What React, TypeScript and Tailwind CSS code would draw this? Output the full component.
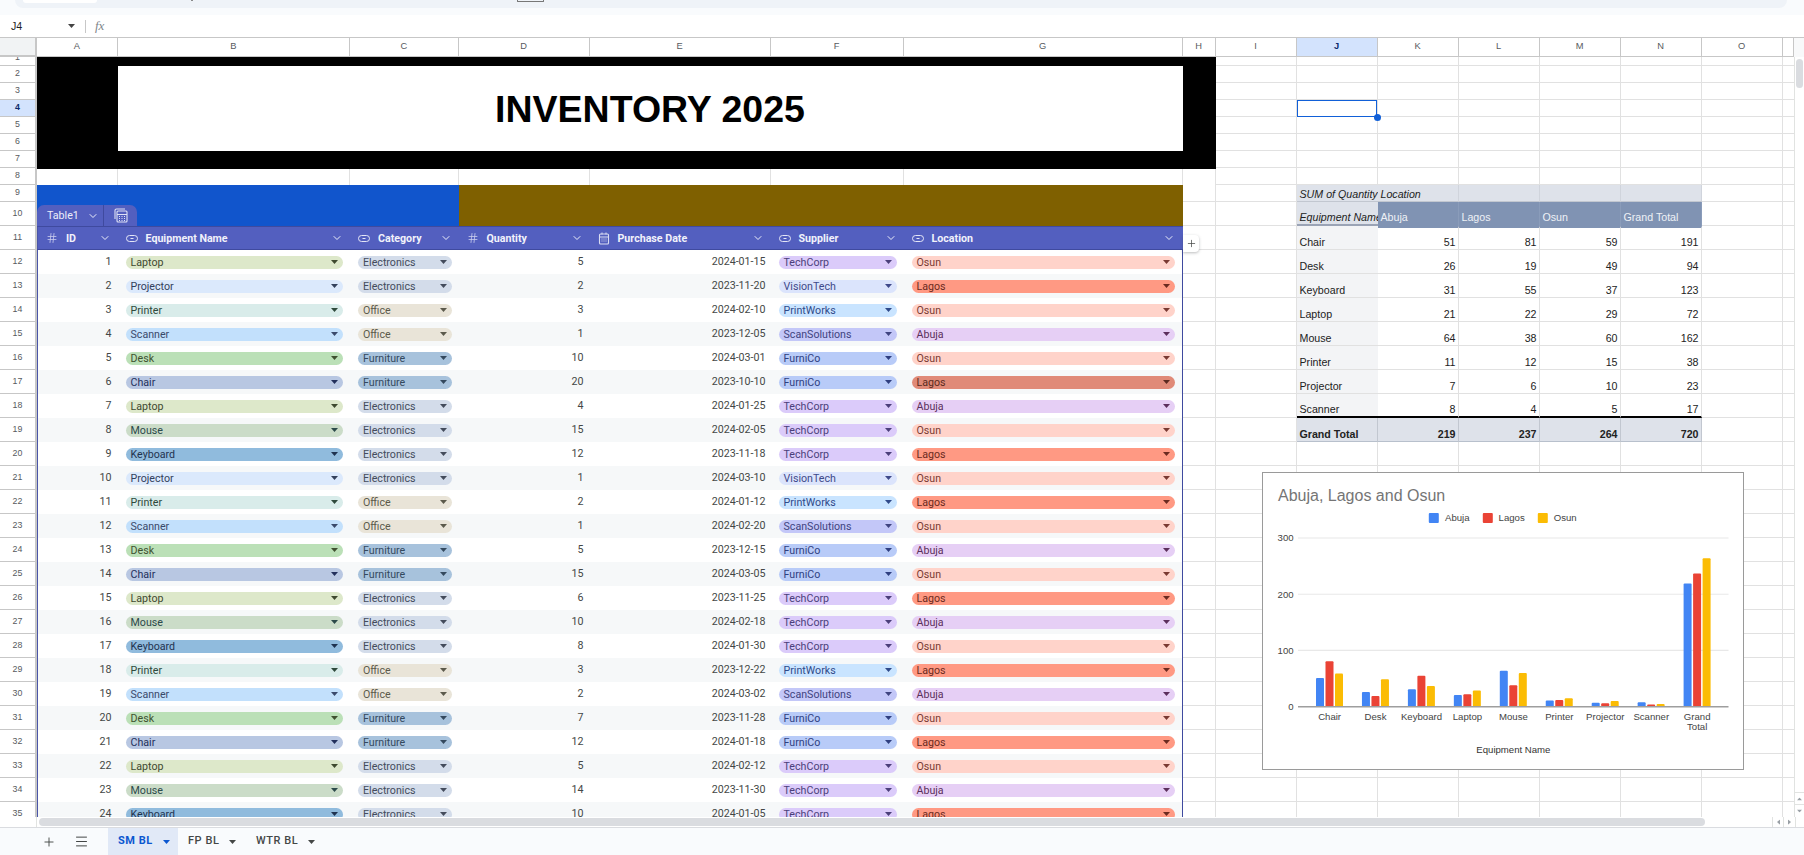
import { ChevronDown, Hash, Menu, Plus } from "lucide-react";

const SANS = "font-['Liberation_Sans',Arial,sans-serif]";

// row heights of the sheet, row 1 is scrolled half out of view
const ROW_HEIGHTS = [
  9, 17, 17, 17, 17, 17, 17, 17, 17, 24, 24, 24, 24, 24, 24, 24, 24, 24, 24, 24, 24, 24, 24, 24,
  24, 24, 24, 24, 24, 24, 24, 24, 24, 24, 24,
];
const rowHeight = (n: number) =>
  n === 1 ? "h-[9px]" : n < 10 ? "h-[17px]" : "h-[24px]";

const COLUMNS = [
  { name: "A", w: "w-[80.5px]" },
  { name: "B", w: "w-[232.5px]" },
  { name: "C", w: "w-[108.5px]" },
  { name: "D", w: "w-[131px]" },
  { name: "E", w: "w-[181px]" },
  { name: "F", w: "w-[133px]" },
  { name: "G", w: "w-[279px]" },
  { name: "H", w: "w-[33px]" },
  { name: "I", w: "w-[81px]" },
  { name: "J", w: "w-[81px]" },
  { name: "K", w: "w-[81px]" },
  { name: "L", w: "w-[81px]" },
  { name: "M", w: "w-[81px]" },
  { name: "N", w: "w-[81px]" },
  { name: "O", w: "w-[81px]" },
  { name: "", w: "w-[11.5px]" },
];

const CHIPS: Record<string, string> = {
  Laptop: "bg-[#dde8ca] text-[#3f4a30]",
  Projector: "bg-[#dbe9fc] text-[#33415c]",
  Printer: "bg-[#d9ecea] text-[#2f4a3c]",
  Scanner: "bg-[#c2e0fc] text-[#3a4a6b]",
  Desk: "bg-[#bbe0b7] text-[#3f5130]",
  Chair: "bg-[#b8c7e2] text-[#23305c]",
  Mouse: "bg-[#cbdcc8] text-[#2c4a4a]",
  Keyboard: "bg-[#90bbdd] text-[#1f3350]",
  Electronics: "bg-[#d3dcea] text-[#444c5c]",
  Office: "bg-[#e9e4d8] text-[#5c5a4c]",
  Furniture: "bg-[#a7c2dc] text-[#34495e]",
  TechCorp: "bg-[#dbcbfa] text-[#4b3f7a]",
  VisionTech: "bg-[#dbe4fc] text-[#3f4a8a]",
  PrintWorks: "bg-[#c9e4ff] text-[#2f4a8a]",
  ScanSolutions: "bg-[#c3c7f8] text-[#3f4480]",
  FurniCo: "bg-[#b8cbf8] text-[#2f3f80]",
  Osun: "bg-[#ffd3ca] text-[#7a3a32]",
  Lagos: "bg-[#ff9983] text-[#6b2a20]",
  LagosDark: "bg-[#e08a78] text-[#5c2a20]",
  Abuja: "bg-[#e6cff5] text-[#5c2f5c]",
};

const ROWS: [number, string, string, number, string, string, string][] = [
  [1, "Laptop", "Electronics", 5, "2024-01-15", "TechCorp", "Osun"],
  [2, "Projector", "Electronics", 2, "2023-11-20", "VisionTech", "Lagos"],
  [3, "Printer", "Office", 3, "2024-02-10", "PrintWorks", "Osun"],
  [4, "Scanner", "Office", 1, "2023-12-05", "ScanSolutions", "Abuja"],
  [5, "Desk", "Furniture", 10, "2024-03-01", "FurniCo", "Osun"],
  [6, "Chair", "Furniture", 20, "2023-10-10", "FurniCo", "LagosDark"],
  [7, "Laptop", "Electronics", 4, "2024-01-25", "TechCorp", "Abuja"],
  [8, "Mouse", "Electronics", 15, "2024-02-05", "TechCorp", "Osun"],
  [9, "Keyboard", "Electronics", 12, "2023-11-18", "TechCorp", "Lagos"],
  [10, "Projector", "Electronics", 1, "2024-03-10", "VisionTech", "Osun"],
  [11, "Printer", "Office", 2, "2024-01-12", "PrintWorks", "Lagos"],
  [12, "Scanner", "Office", 1, "2024-02-20", "ScanSolutions", "Osun"],
  [13, "Desk", "Furniture", 5, "2023-12-15", "FurniCo", "Abuja"],
  [14, "Chair", "Furniture", 15, "2024-03-05", "FurniCo", "Osun"],
  [15, "Laptop", "Electronics", 6, "2023-11-25", "TechCorp", "Lagos"],
  [16, "Mouse", "Electronics", 10, "2024-02-18", "TechCorp", "Abuja"],
  [17, "Keyboard", "Electronics", 8, "2024-01-30", "TechCorp", "Osun"],
  [18, "Printer", "Office", 3, "2023-12-22", "PrintWorks", "Lagos"],
  [19, "Scanner", "Office", 2, "2024-03-02", "ScanSolutions", "Abuja"],
  [20, "Desk", "Furniture", 7, "2023-11-28", "FurniCo", "Osun"],
  [21, "Chair", "Furniture", 12, "2024-01-18", "FurniCo", "Lagos"],
  [22, "Laptop", "Electronics", 5, "2024-02-12", "TechCorp", "Osun"],
  [23, "Mouse", "Electronics", 14, "2023-11-30", "TechCorp", "Abuja"],
  [24, "Keyboard", "Electronics", 10, "2024-01-05", "TechCorp", "Lagos"],
];

const PIVOT: [string, number, number, number, number][] = [
  ["Chair", 51, 81, 59, 191],
  ["Desk", 26, 19, 49, 94],
  ["Keyboard", 31, 55, 37, 123],
  ["Laptop", 21, 22, 29, 72],
  ["Mouse", 64, 38, 60, 162],
  ["Printer", 11, 12, 15, 38],
  ["Projector", 7, 6, 10, 23],
  ["Scanner", 8, 4, 5, 17],
];
const TOTALS: [string, number, number, number, number] = ["Grand Total", 219, 237, 264, 720];

const Caret = ({ className = "" }: { className?: string }) => (
  <svg viewBox="0 0 7 4" className={`h-[4px] w-[7px] shrink-0 ${className}`}>
    <polygon points="0,0 7,0 3.5,4" fill="currentColor" />
  </svg>
);

const ChipIcon = () => (
  <svg viewBox="0 0 12 7" className="h-[7px] w-[12px] text-[#e4e6f6]" fill="none" stroke="currentColor">
    <rect x=".5" y=".5" width="11" height="6" rx="3" strokeWidth="1" />
    <rect x="4.5" y="3" width="3" height="1" fill="currentColor" stroke="none" />
  </svg>
);

const DateIcon = () => (
  <svg viewBox="0 0 12 13" className="h-[13px] w-[12px] text-[#d9dcf2]" fill="none" stroke="currentColor">
    <rect x="1.5" y="2" width="9" height="10" rx="1" strokeWidth="1.1" />
    <path d="M1.5 5h9M3.5 7h1M5.5 7h1M7.5 7h1M3.5 9h1M5.5 9h1M7.5 9h1M4 .5v2M8 .5v2" strokeWidth="1" />
  </svg>
);

const CalcIcon = () => (
  <svg viewBox="0 0 14 15" className="h-[15px] w-[14px] text-[#dfe2f5]" fill="none" stroke="currentColor">
    <path d="M1 11V2.5A1.5 1.5 0 0 1 2.5 1H11" strokeWidth="1.1" />
    <rect x="3" y="3" width="10" height="11" rx="1" strokeWidth="1.1" />
    <path d="M3 6.5h10M5 8.5h1M7.5 8.5h1M10 8.5h1M5 10.5h1M7.5 10.5h1M10 10.5h1M5 12.5h1M7.5 12.5h1M10 12.5h1" strokeWidth="1.1" />
  </svg>
);

const HEADERS = [
  { label: "ID", w: "w-[80.5px] border-l border-l-[#4a55a8]", icon: <Hash size={12} strokeWidth={1.6} className="text-[#c9cdee]" /> },
  { label: "Equipment Name", w: "w-[232.5px]", icon: <ChipIcon /> },
  { label: "Category", w: "w-[108.5px]", icon: <ChipIcon /> },
  { label: "Quantity", w: "w-[131px]", icon: <Hash size={12} strokeWidth={1.6} className="text-[#c9cdee]" /> },
  { label: "Purchase Date", w: "w-[181px]", icon: <DateIcon /> },
  { label: "Supplier", w: "w-[133px]", icon: <ChipIcon /> },
  { label: "Location", w: "w-[278px]", icon: <ChipIcon /> },
];

const Chip = ({ value, w }: { value: string; w: string }) => (
  <div className={`${w} flex h-full items-center pl-[8px] pr-[7px]`}>
    <div className={`flex h-[13px] w-full items-center justify-between rounded-full pl-[5px] pr-[5px] ${CHIPS[value]}`}>
      <span className="whitespace-nowrap leading-[13px]">{value.replace("Dark", "")}</span>
      <Caret />
    </div>
  </div>
);

const TableRow = ({ row, index }: { row: (typeof ROWS)[number]; index: number }) => (
  <div className="flex h-[24px] shrink-0">
    <div
      className={`flex w-[1145.5px] text-[10.67px] text-[#444746] border-l border-l-[#4a55a8] border-r border-r-[#3f4a9f] ${
        index % 2 === 0 ? "bg-white" : "bg-[#f6f8f9]"
      }`}
    >
      <div className="flex h-full w-[79.5px] items-center justify-end pr-[6px]">{row[0]}</div>
      <Chip value={row[1]} w="w-[232.5px]" />
      <Chip value={row[2]} w="w-[108.5px]" />
      <div className="flex h-full w-[131px] items-center justify-end pr-[6px]">{row[3]}</div>
      <div className="flex h-full w-[181px] items-center justify-end pr-[5px]">{row[4]}</div>
      <Chip value={row[5]} w="w-[133px]" />
      <Chip value={row[6]} w="w-[278px]" />
    </div>
    <div className="w-[33px] border-r border-b border-[#e1e1e1]" />
  </div>
);

const LeftPane = () => (
  <div className="flex w-[1178.5px] shrink-0 flex-col">
    {/* title banner */}
    <div className="h-[112px] shrink-0 bg-black pt-[9px] pb-[18px] pl-[80.5px] pr-[33px]">
      <div className={`flex h-full items-center justify-center bg-white pt-px text-[37.5px] font-bold text-black ${SANS}`}>
        INVENTORY 2025
      </div>
    </div>

    {/* row 8 */}
    <div className="flex h-[16px] shrink-0">
      {COLUMNS.slice(0, 8).map((c) => (
        <div key={c.name} className={`${c.w} border-r border-[#e1e1e1]`} />
      ))}
    </div>

    {/* rows 9 and 10, blue and brown bands with the table tab */}
    <div className="flex h-[41px] shrink-0">
      <div className="flex w-[421.5px] items-end bg-[#1155cc]">
        <div className="flex h-[21px] w-[100px] rounded-t-[7px] bg-[#535fbf] text-[10.67px] text-[#eceefa]">
          <div className="flex w-[67px] items-center border-r border-[#3f4a9f] pl-[10px]">
            Table1
            <ChevronDown size={12} strokeWidth={2} className="ml-[8px] text-[#eceefa]" />
          </div>
          <div className="flex flex-1 items-center justify-center">
            <CalcIcon />
          </div>
        </div>
      </div>
      <div className="w-[724px] bg-[#7f6000]" />
      <div className="flex w-[33px] flex-col border-r border-[#e1e1e1]">
        <div className="h-[17px] border-b border-[#e1e1e1]" />
        <div className="h-[24px] border-b border-[#e1e1e1]" />
      </div>
    </div>

    {/* table header, row 11 */}
    <div className="relative flex h-[24px] shrink-0">
      <div className="flex w-[1145.5px] border-y border-[#3f4a9f] bg-[#535fbf] text-[10.67px] font-bold text-[#f1f2fb]">
        {HEADERS.map((h) => (
          <div key={h.label} className={`${h.w} flex items-center pl-[7px] pr-[7px]`}>
            <span className="flex w-[14px] justify-center">{h.icon}</span>
            <span className="ml-[7px] whitespace-nowrap pt-px">{h.label}</span>
            <ChevronDown size={12} strokeWidth={2} className="ml-auto text-[#eceefa]" />
          </div>
        ))}
      </div>
      <div className="w-[33px] border-r border-b border-[#e1e1e1]" />
      <div className="absolute left-[1146px] top-[9px] flex h-[17px] w-[16px] items-center justify-center rounded-r-[4px] bg-white shadow-[0_1px_3px_rgba(60,64,67,0.35)]">
        <Plus size={11} strokeWidth={1.6} className="text-[#444746]" />
      </div>
    </div>

    {ROWS.map((row, i) => (
      <TableRow key={row[0]} row={row} index={i} />
    ))}
  </div>
);

const NUM = "flex items-end justify-end pr-[2px]";

const PivotCells = ({ n }: { n: number }) => {
  const base = `${SANS} text-[10.67px] leading-[14px] text-[#222] h-full overflow-hidden whitespace-nowrap`;
  if (n === 9) {
    const c = `${base} w-[81px] italic bg-[#dee2ea] border-b border-[#c2c7d0] flex items-center pt-[2px] pl-[3px]`;
    return (
      <>
        <div className={c}>SUM of Quantity</div>
        <div className={`${c} border-r border-r-[#d0d4dc]`}>Location</div>
        <div className={`${c} border-r border-r-[#d0d4dc]`} />
        <div className={`${c} border-r border-r-[#d0d4dc]`} />
        <div className={`${c} border-r border-r-[#d0d4dc]`} />
      </>
    );
  }
  if (n === 10) {
    const c = `${base} w-[81px] bg-[#8093b3] text-[#eef1f6] flex items-end pb-[2px] pl-[3px] border-r border-[#8a9cba]`;
    return (
      <>
        <div className={`${base} italic w-[81px] bg-[#dee2ea] flex items-end pb-0 pl-[3px] border-b-2 border-[#9aa3b5]`}>
          Equipment Name
        </div>
        <div className={c}>Abuja</div>
        <div className={c}>Lagos</div>
        <div className={c}>Osun</div>
        <div className={c}>Grand Total</div>
      </>
    );
  }
  if (n >= 11 && n <= 18) {
    const [name, a, l, o, t] = PIVOT[n - 11];
    const edge = n === 18 ? "border-b-2 border-b-black" : "border-b border-b-[#e1e1e1]";
    const top = n === 11 ? "border-t-2 border-t-[#8093b3]" : "";
    const c = `${base} ${NUM} w-[81px] ${edge} ${top} border-r border-r-[#e1e1e1]`;
    return (
      <>
        <div className={`${base} ${edge} w-[81px] bg-[#f3f4f6] flex items-end pl-[3px]`}>{name}</div>
        <div className={c}>{a}</div>
        <div className={c}>{l}</div>
        <div className={c}>{o}</div>
        <div className={c}>{t}</div>
      </>
    );
  }
  if (n === 19) {
    const [name, a, l, o, t] = TOTALS;
    const c = `${base} ${NUM} w-[81px] font-bold bg-[#dee2ea] border-b border-b-[#b8c0cc] border-r border-r-[#c2c7d0]`;
    return (
      <>
        <div className={`${base} font-bold w-[81px] bg-[#dee2ea] flex items-end pl-[3px] border-b border-b-[#b8c0cc] border-r border-r-[#c2c7d0]`}>
          {name}
        </div>
        <div className={c}>{a}</div>
        <div className={c}>{l}</div>
        <div className={c}>{o}</div>
        <div className={c}>{t}</div>
      </>
    );
  }
  return (
    <>
      <div className={`h-full w-[81px] border-r border-b border-[#e1e1e1] ${n === 4 ? "relative z-10" : ""}`}>
        {n === 4 && (
          <>
            <div className="absolute inset-0 -bottom-px border-[1.5px] border-[#1160d8]" />
            <div className="absolute -right-[4px] -bottom-[5px] h-[7px] w-[7px] rounded-full bg-[#1160d8]" />
          </>
        )}
      </div>
      {[0, 1, 2, 3].map((i) => (
        <div key={i} className="h-full w-[81px] border-r border-b border-[#e1e1e1]" />
      ))}
    </>
  );
};

const RightPane = () => (
  <div className="flex w-[578.5px] shrink-0 flex-col">
    {ROW_HEIGHTS.map((_, i) => {
      const n = i + 1;
      return (
        <div key={n} className={`flex shrink-0 ${rowHeight(n)}`}>
          <div className="h-full w-[81px] border-r border-b border-[#e1e1e1]" />
          <PivotCells n={n} />
          <div className="h-full w-[81px] border-r border-b border-[#e1e1e1]" />
          <div className="h-full w-[11.5px] border-b border-[#e1e1e1]" />
        </div>
      );
    })}
  </div>
);

const BAR_COLORS = ["#4285f4", "#ea4335", "#fbbc04"];
const ZERO_Y = 706.7;
const UNIT = 0.5623;

const Chart = () => {
  const groups = [...PIVOT, TOTALS];
  return (
    <div className="absolute left-[1262px] top-[415px] z-20 h-[298px] w-[482px] border border-[#9a9a9a] bg-white">
      <svg viewBox="1263 473 480 296" className={`h-full w-full ${SANS}`}>
        <text x="1278" y="500.5" fontSize="16" fill="#757575">Abuja, Lagos and Osun</text>
        {[
          ["Abuja", 1428.8, 1445],
          ["Lagos", 1482.8, 1498.6],
          ["Osun", 1537.8, 1553.7],
        ].map(([label, sx, tx], i) => (
          <g key={label as string}>
            <rect x={sx as number} y="513" width="10" height="10" rx="1" fill={BAR_COLORS[i]} />
            <text x={tx as number} y="521.3" fontSize="9.6" fill="#444">{label}</text>
          </g>
        ))}
        {[300, 200, 100].map((v) => (
          <g key={v}>
            <line x1="1298" x2="1728.5" y1={ZERO_Y - v * UNIT} y2={ZERO_Y - v * UNIT} stroke="#e8e8e8" strokeWidth="1.2" />
          </g>
        ))}
        {[300, 200, 100, 0].map((v) => (
          <text key={v} x="1293.6" y={ZERO_Y - v * UNIT + 3.4} textAnchor="end" fontSize="9.6" fill="#444">{v}</text>
        ))}
        {groups.map((g, i) => {
          const cx = 1329.6 + i * 45.95;
          return (
            <g key={g[0]}>
              {[g[1], g[2], g[3]].map((v, b) => (
                <rect
                  key={b}
                  x={cx - 13.6 + b * 9.5}
                  y={ZERO_Y - v * UNIT}
                  width="8"
                  height={v * UNIT}
                  rx="1"
                  fill={BAR_COLORS[b]}
                />
              ))}
              {g[0] === "Grand Total" ? (
                <>
                  <text x={cx} y="719.5" textAnchor="middle" fontSize="9.6" fill="#444">Grand</text>
                  <text x={cx} y="729.5" textAnchor="middle" fontSize="9.6" fill="#444">Total</text>
                </>
              ) : (
                <text x={cx} y="719.5" textAnchor="middle" fontSize="9.6" fill="#444">{g[0]}</text>
              )}
            </g>
          );
        })}
        <line x1="1298" x2="1728.5" y1={ZERO_Y} y2={ZERO_Y} stroke="#9e9e9e" strokeWidth="1.4" />
        <text x="1513.4" y="753.3" textAnchor="middle" fontSize="9.6" fill="#333">Equipment Name</text>
      </svg>
    </div>
  );
};

export default function App() {
  return (
    <div className="flex h-[855px] w-[1804px] flex-col overflow-hidden bg-white font-[Roboto,sans-serif]">
      {/* top strip, the toolbar is nearly scrolled out */}
      <div className="h-[15px] shrink-0 bg-[#f9fbfd] pl-[15px] pr-[17px]">
        <div className="flex h-[8px] rounded-b-[9px] bg-[#eff3f8] pl-[8px]">
          <div className="h-[3px] w-[74px] rounded-b-[4px] bg-white" />
          <div className="ml-[94px] h-[1px] w-[2px] bg-[#8a8a8a]" />
          <div className="ml-[324px] h-[2px] w-[27px] rounded-b-[1px] border-x border-b border-[#777]" />
        </div>
      </div>

      {/* formula bar */}
      <div className="flex h-[23px] shrink-0 items-center border-b border-[#c7c7c7] bg-white">
        <span className={`ml-[11px] w-[57px] text-[10.67px] text-[#1f1f1f] ${SANS}`}>J4</span>
        <Caret className="text-[#444]" />
        <div className="ml-[10px] h-[13px] w-px bg-[#c7c7c7]" />
        <span className="ml-[9px] font-['Liberation_Serif',serif] text-[13px] italic text-[#80868b]">fx</span>
      </div>

      {/* column headers */}
      <div className={`flex h-[19px] shrink-0 ${SANS} text-[9.3px] text-[#575a5e]`}>
        <div className="w-[37px] border-r-2 border-b-2 border-[#c7c7c7] bg-[#f1f3f4]" />
        {COLUMNS.map((c) => (
          <div
            key={c.name}
            className={`${c.w} flex items-center justify-center border-r border-b border-[#c7c7c7] ${
              c.name === "J" ? "bg-[#d3e3fd] font-bold text-[#0b2a6b]" : "bg-white"
            }`}
          >
            {c.name}
          </div>
        ))}
        <div className="flex-1 bg-[#f8f9fa]" />
      </div>

      {/* sheet body */}
      <div className="relative flex h-[760px] shrink-0 overflow-hidden">
        <div className={`flex w-[37px] shrink-0 flex-col ${SANS} text-[8.8px] text-[#575a5e]`}>
          {ROW_HEIGHTS.map((_, i) => {
            const n = i + 1;
            return (
              <div
                key={n}
                className={`shrink-0 overflow-hidden border-r-2 border-b border-[#c7c7c7] ${rowHeight(n)} ${
                  n === 4 ? "bg-[#d3e3fd] font-bold text-[#0b2a6b]" : "bg-white"
                }`}
              >
                <div className={`flex items-center justify-center ${n === 1 ? "-mt-[8px] h-[17px]" : "h-full"}`}>{n}</div>
              </div>
            );
          })}
        </div>

        <LeftPane />
        <RightPane />

        {/* vertical scrollbar */}
        <div className="flex flex-1 flex-col border-l border-[#e1e3e1] bg-white">
          <div className="mx-auto mt-[2px] h-[29px] w-[7px] rounded-full bg-[#dadce0]" />
          <div className="mt-auto flex h-[12px] items-center justify-center border-t border-[#e1e3e1]">
            <Caret className="rotate-180 scale-75 text-[#9aa0a6]" />
          </div>
          <div className="mb-[1px] flex h-[12px] items-center justify-center border-t border-[#e1e3e1]">
            <Caret className="scale-75 text-[#9aa0a6]" />
          </div>
        </div>

        <Chart />
      </div>

      {/* horizontal scrollbar */}
      <div className="flex h-[11px] shrink-0 items-start border-b border-[#dadce0] bg-white">
        <div className="h-full w-[37px] border-r border-[#e1e3e1]" />
        <div className="ml-[2px] mt-px h-[8px] w-[1666px] rounded-full bg-[#dadce0]" />
        <div className="ml-[67px] flex h-full w-[11px] items-center justify-center border-l border-[#e1e3e1]">
          <Caret className="rotate-90 scale-75 text-[#9aa0a6]" />
        </div>
        <div className="flex h-full w-[13px] items-center justify-center border-l border-r border-[#e1e3e1]">
          <Caret className="-rotate-90 scale-75 text-[#9aa0a6]" />
        </div>
      </div>

      {/* sheet tabs */}
      <div className="flex flex-1 items-stretch bg-[#f9fbfd] text-[11px] font-medium tracking-[0.05em] text-[#444746]">
        <div className="flex w-[65px] items-center justify-end pr-[9px]">
          <Plus size={14} strokeWidth={1.6} />
        </div>
        <div className="flex w-[43px] items-center pl-[9px]">
          <Menu size={15} strokeWidth={1.6} />
        </div>
        <div className="flex w-[70px] items-center bg-[#e1e9f7] pl-[10px] font-bold text-[#0b57d0]">
          SM BL
          <Caret className="ml-[10px]" />
        </div>
        <div className="flex w-[67px] items-center pl-[10px]">
          FP BL
          <Caret className="ml-[10px]" />
        </div>
        <div className="flex items-center pl-[11px]">
          WTR BL
          <Caret className="ml-[10px]" />
        </div>
      </div>
    </div>
  );
}
